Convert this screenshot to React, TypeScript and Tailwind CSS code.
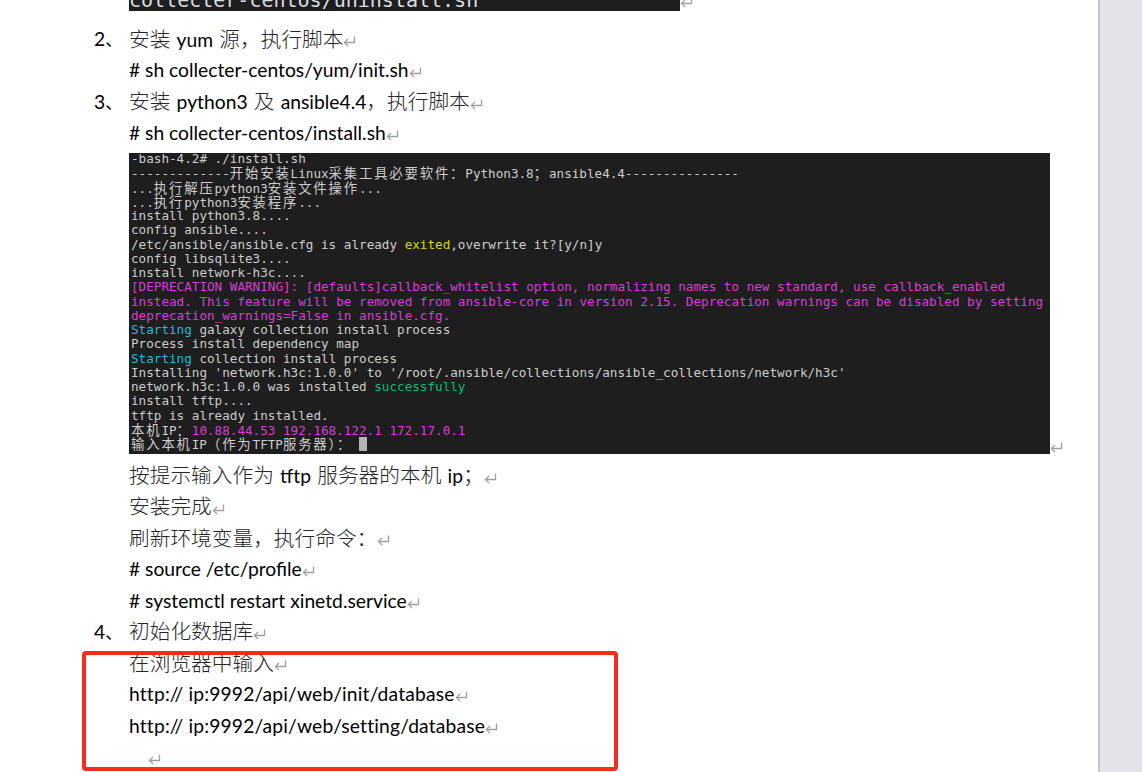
function ReturnMark({ className = '' }: { className?: string }) {
  return (
    <svg width="13" height="12" viewBox="0 0 13 12" fill="none" stroke="#a0a0a0" strokeWidth="1.3" className={`shrink-0 ${className}`}>
      <path d="M11.5 1.5V7.5H1.5" />
      <path d="M5 4L1.5 7.5L5 11" />
    </svg>
  );
}

function Zh({ children }: { children: React.ReactNode }) {
  return <span className="font-['Noto_Sans_CJK_SC',sans-serif] font-light text-[#262626] text-[20.7px]">{children}</span>;
}

function Row({ num, latin, children }: { num?: string; latin?: boolean; children: React.ReactNode }) {
  return (
    <div className="flex h-[31.25px] items-center whitespace-pre pl-[94px] text-[19.25px] text-black">
      <div className="w-[35px] shrink-0">{num && <span>{num}<span className="font-['Noto_Sans_CJK_SC',sans-serif] text-[17px]">、</span></span>}</div>
      <div className={latin ? '' : '-translate-y-px [word-spacing:1.3px]'}>{children}</div>
      <ReturnMark className="mt-[3px]" />
    </div>
  );
}

// CJK cells are two columns wide in the terminal
function C({ children }: { children: React.ReactNode }) {
  return <span className="font-['Noto_Sans_CJK_SC',sans-serif] text-[13.4px] leading-none tracking-[1.8px]">{children}</span>;
}

const pink = 'text-[#d63fd6]';
const cyan = 'text-[#29b8d0]';

function Terminal() {
  return (
    <div className="h-[301px] w-[921px] shrink-0 overflow-hidden bg-[#1e1e1e] pl-[2px] font-['DejaVu_Sans_Mono',monospace] text-[12.63px] leading-[14.25px] text-[#cccccc] whitespace-pre">
      <div className="-mt-px grid auto-rows-[14.25px]">
        <div>-bash-4.2# ./install.sh</div>
        <div>-------------<C>开始安装</C>Linux<C>采集工具必要软件：</C>Python3.8<C>；</C>ansible4.4---------------</div>
        <div>...<C>执行解压</C>python3<C>安装文件操作</C>...</div>
        <div>...<C>执行</C>python3<C>安装程序</C>...</div>
        <div>install python3.8....</div>
        <div>config ansible....</div>
        <div>/etc/ansible/ansible.cfg is already <span className="text-[#d8d810]">exited</span>,overwrite it?[y/n]y</div>
        <div>config libsqlite3....</div>
        <div>install network-h3c....</div>
        <div className={pink}>[DEPRECATION WARNING]: [defaults]callback_whitelist option, normalizing names to new standard, use callback_enabled</div>
        <div className={pink}>instead. This feature will be removed from ansible-core in version 2.15. Deprecation warnings can be disabled by setting</div>
        <div className={pink}>deprecation_warnings=False in ansible.cfg.</div>
        <div><span className={cyan}>Starting</span> galaxy collection install process</div>
        <div>Process install dependency map</div>
        <div><span className={cyan}>Starting</span> collection install process</div>
        <div>Installing 'network.h3c:1.0.0' to '/root/.ansible/collections/ansible_collections/network/h3c'</div>
        <div>network.h3c:1.0.0 was installed <span className="text-[#0dbc79]">successfully</span></div>
        <div>install tftp....</div>
        <div>tftp is already installed.</div>
        <div><C>本机</C>IP<C>：</C><span className={pink}>10.88.44.53 192.168.122.1 172.17.0.1</span></div>
        <div className="flex items-center"><span><C>输入本机</C>IP<C>（作为</C>TFTP<C>服务器）：</C></span><span className="ml-[7px] h-[14px] w-[8px] bg-[#b5b5b5]" /></div>
      </div>
    </div>
  );
}

export default function App() {
  return (
    <div className="relative flex h-[772px] w-[1142px] overflow-hidden bg-white font-['Lato',sans-serif]">
      <div className="w-[1098px] shrink-0">
        {/* end of the previous screenshot */}
        <div className="ml-[129px] flex h-[11px] items-start">
          <div className="h-[11px] w-[551px] overflow-hidden bg-[#1e1e1e]">
            <div className="-mt-[12px] whitespace-pre font-['DejaVu_Sans_Mono',monospace] text-[20px] leading-[24px] text-[#d8dde0]">collecter-centos/uninstall.sh</div>
          </div>
          <ReturnMark className="-mt-[4px]" />
        </div>
        <div className="h-[13px]" />

        <Row num="2"><Zh>安装</Zh> yum <Zh>源，执行脚本</Zh></Row>
        <Row latin># sh collecter-centos/yum/init.sh</Row>
        <Row num="3"><Zh>安装</Zh> python3 <Zh>及</Zh> ansible4.4<Zh>，执行脚本</Zh></Row>
        <Row latin># sh collecter-centos/install.sh</Row>

        <div className="mb-[6.5px] ml-[129px] mt-[4px] flex items-end">
          <Terminal />
          <ReturnMark className="mb-[1px]" />
        </div>

        <Row><Zh>按提示输入作为</Zh> tftp <Zh>服务器的本机</Zh> ip<Zh>；</Zh></Row>
        <Row><Zh>安装完成</Zh></Row>
        <Row><Zh>刷新环境变量，执行命令：</Zh></Row>
        <Row latin># source /etc/profile</Row>
        <Row latin># systemctl restart xinetd.service</Row>
        <Row num="4"><Zh>初始化数据库</Zh></Row>
        <Row><Zh>在浏览器中输入</Zh></Row>
        <Row latin><span className="tracking-[0.17px]">http:// ip:9992/api/web/init/database</span></Row>
        <Row latin><span className="tracking-[0.17px]">http:// ip:9992/api/web/setting/database</span></Row>
        <Row latin><span className="inline-block w-[19px]" /></Row>
      </div>
      <div className="flex-1 border-l-2 border-[#c6c6c6] bg-[#e3e4ea]" />

      {/* red annotation */}
      <div className="absolute left-[82px] top-[651px] h-[120px] w-[536px] rounded-[4px] border-4 border-[#ff2a1c]" />
    </div>
  );
}
